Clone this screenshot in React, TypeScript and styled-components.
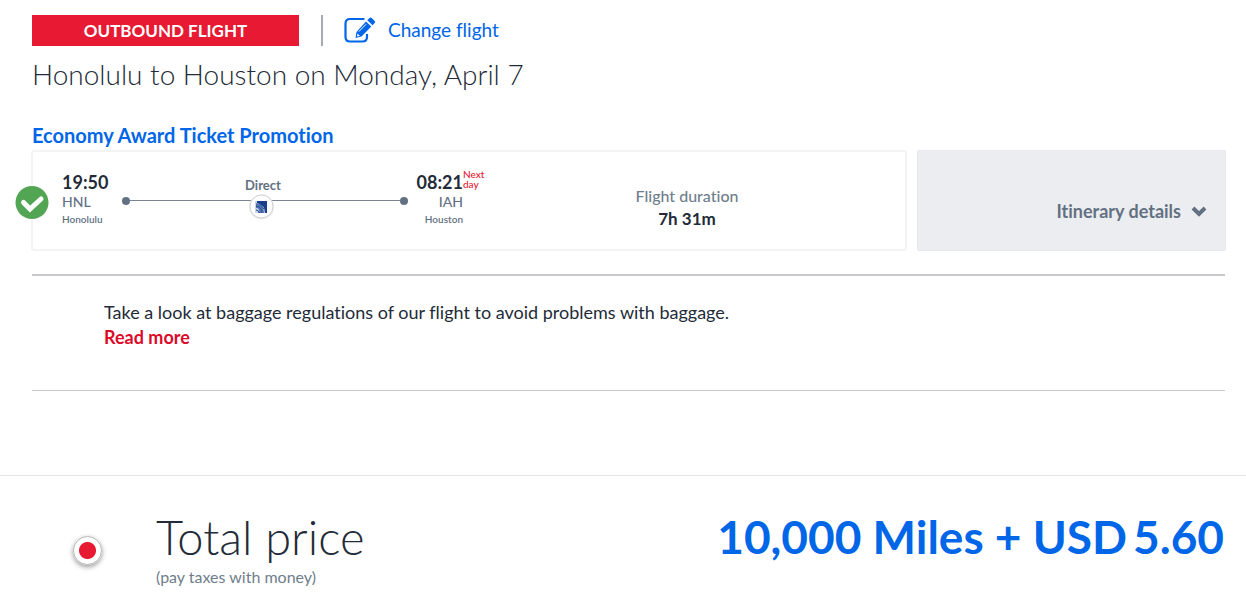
import React from "react";
import styled, { createGlobalStyle } from "styled-components";

const GlobalStyle = createGlobalStyle`
  *, *::before, *::after { box-sizing: border-box; }
  body {
    margin: 0;
    background: #fff;
    color: #232b38;
    font-family: Lato, "Open Sans", sans-serif;
    font-size: 16px;
    font-variant-ligatures: none;
  }
  h1, h2, p { margin: 0; }
  button { font: inherit; }
`;

const Section = styled.section`
  padding: 15px 21px 84px 32px;
`;

const Header = styled.header`
  display: flex;
  align-items: center;
  height: 31px;
`;

const Badge = styled.span`
  width: 267px;
  line-height: 31px;
  background: #e81932;
  color: #fff;
  font-size: 17px;
  font-weight: 700;
  text-align: center;
`;

const ChangeLink = styled.a`
  display: flex;
  align-items: center;
  gap: 12px;
  height: 31px;
  margin-left: 22px;
  padding: 0 0 2px 21px;
  border-left: 2px solid #a5abb5;
  color: #0066e8;
  font-size: 19px;
  line-height: 29px;
  text-decoration: none;
`;

const Title = styled.h1`
  margin-top: 10px;
  font-size: 28px;
  font-weight: 300;
  line-height: 36px;
`;

const FareName = styled.h2`
  margin-top: 31px;
  padding-bottom: 2px;
  color: #0066e8;
  font-size: 20px;
  font-weight: 700;
  line-height: 25px;
`;

const FlightRow = styled.div`
  display: flex;
  gap: 10px;
  margin: 0 -1px;
`;

const FlightCard = styled.article`
  position: relative;
  display: flex;
  flex: 1;
  height: 101px;
  padding: 20px 0 20px 29px;
  border: 2px solid #f3f3f4;
  border-radius: 3px;
`;

const SelectedMark = styled.svg`
  position: absolute;
  left: -19px;
  top: 32px;
`;

const Stop = styled.div<{ $end?: boolean }>`
  display: flex;
  flex-direction: column;
  width: ${(p) => (p.$end ? 47 : 60)}px;
  text-align: ${(p) => (p.$end ? "right" : "left")};
  color: #627182;
`;

const Time = styled.time`
  position: relative;
  color: #232b38;
  font-size: 18px;
  font-weight: 700;
  line-height: 20px;
`;

const NextDay = styled.span`
  position: absolute;
  left: 100%;
  top: -3px;
  width: 24px;
  color: #e81932;
  font-size: 10px;
  font-weight: 500;
  line-height: 10px;
  text-align: left;
`;

const Code = styled.span`
  font-size: 14px;
  font-weight: 500;
  line-height: 20px;
`;

const City = styled.span`
  font-size: 10px;
  font-weight: 600;
  line-height: 14px;
`;

const Route = styled.div`
  display: flex;
  flex-direction: column;
  flex-shrink: 0;
  align-items: center;
  width: 286px;
  margin-right: 8px;
`;

const RouteLabel = styled.span`
  padding: 6px 4px 0 0;
  color: #627182;
  font-size: 13px;
  font-weight: 700;
  line-height: 15px;
`;

const RouteTrack = styled.svg`
  flex-shrink: 0;
  margin-top: 1px;
`;

const Duration = styled.dl`
  flex: 1;
  margin: 12px 0 0;
  padding-left: 6px;
  text-align: center;
  line-height: 23px;
`;

const DurationLabel = styled.dt`
  color: #6f7e8c;
  font-weight: 500;
`;

const DurationValue = styled.dd`
  margin: 0;
  font-size: 17px;
  font-weight: 700;
`;

const DetailsPanel = styled.div`
  display: flex;
  align-items: center;
  justify-content: flex-end;
  flex: 0 0 309px;
  padding: 21px 18px 0 0;
  border: 1px solid #e6e8ec;
  border-radius: 2px;
  background: #ecedf1;
`;

const DetailsButton = styled.button`
  display: flex;
  align-items: center;
  gap: 10px;
  padding: 0;
  border: 0;
  background: none;
  color: #627182;
  font-size: 18px;
  font-weight: 700;
  line-height: 22px;
`;

const Notice = styled.div`
  margin-top: 23px;
  padding: 24px 72px 40px;
  border-top: 2px solid #c8c8cc;
  border-bottom: 1px solid #c8c8cc;
  font-size: 18px;
  line-height: 25px;
`;

const ReadMore = styled.a`
  color: #dc0a28;
  font-weight: 700;
  text-decoration: none;
`;

const Summary = styled.section`
  display: flex;
  align-items: flex-start;
  padding: 33px 22px 8px 73px;
  border-top: 1px solid #e3e3e3;
`;

const PriceRadio = styled.input`
  appearance: none;
  width: 29px;
  height: 29px;
  margin: 27px 54px 0 0;
  border: 1px solid #b4b4b4;
  border-radius: 50%;
  background: radial-gradient(circle, #e81932 8px, #fff 9px);
  box-shadow: 0 2px 5px rgba(0, 0, 0, 0.4);
`;

const PriceLabel = styled.label`
  display: flex;
  flex-direction: column;
  flex: 1;
`;

const PriceHeading = styled.span`
  font-size: 47px;
  font-weight: 300;
  line-height: 56px;
`;

const PriceNote = styled.span`
  color: #6f7e8c;
  font-size: 16px;
  line-height: 24px;
`;

const Price = styled.output`
  display: flex;
  gap: 6px;
  color: #0066e8;
  font-size: 46px;
  font-weight: 700;
  line-height: 56px;
`;

const EditIcon = () => (
  <svg width="32" height="26" viewBox="0 0 32 26" fill="none" aria-hidden="true">
    <path d="M20.500 2H6Q1.500 2 1.500 6.500V20Q1.500 24.500 6 24.500H18.500Q23 24.500 23 20V17" stroke="#0066e8" strokeWidth="2.200" />
    <path d="M22 4.500 27.300 9.500 17.500 19.500 11.500 21 12.500 15Z" fill="#0066e8" />
    <path d="M23.300 3.200 25.500 1Q26.500 0 27.600 1L30.700 4Q31.700 5 30.700 6L28.500 8.200Z" fill="#0066e8" />
    <path d="M14.800 14.600 22 7.300" stroke="#fff" />
    <path d="M13.600 16.500 15.900 18.900 13 19.600Z" fill="#fff" />
  </svg>
);

const RouteLine = () => (
  <RouteTrack width="286" height="30" viewBox="0 0 286 30" aria-hidden="true">
    <path d="M4 6.500H282" stroke="#7b8490" />
    <circle cx="4" cy="7" r="4" fill="#627182" />
    <circle cx="282" cy="7" r="4" fill="#627182" />
    <circle cx="139.500" cy="13" r="12.500" fill="#ececec" />
    <circle cx="139.500" cy="12.500" r="11.500" fill="#fff" stroke="#d0d0d0" />
    <rect x="133" y="7" width="12" height="12" fill="#c9d6e9" />
    <path d="M135 7H145V19H143Q143 11 135 9Z" fill="#1c3c8c" />
    <path d="M134 9Q142 10 142 19H137Q138 14 134 14Z" fill="#5577b2" />
    <path d="M134 12Q140 13 140 19M134 16Q137 16 137 19M137 9 142 15" stroke="#244b94" fill="none" />
  </RouteTrack>
);

export default function App() {
  return (
    <main>
      <GlobalStyle />
      <Section>
        <Header>
          <Badge>OUTBOUND FLIGHT</Badge>
          <ChangeLink href="#change">
            <EditIcon />
            Change flight
          </ChangeLink>
        </Header>
        <Title>Honolulu to Houston on Monday, April 7</Title>
        <FareName>Economy Award Ticket Promotion</FareName>
        <FlightRow>
          <FlightCard>
            <SelectedMark width="36" height="36" viewBox="0 0 36 36" aria-hidden="true">
              <circle cx="18" cy="18" r="18" fill="#fff" />
              <circle cx="18" cy="18.500" r="16.500" fill="#52a552" />
              <path d="M9.500 18.500 16 25 27 15" fill="none" stroke="#fff" strokeWidth="5" strokeLinejoin="miter" strokeLinecap="round" />
            </SelectedMark>
            <Stop>
              <Time>19:50</Time>
              <Code>HNL</Code>
              <City>Honolulu</City>
            </Stop>
            <Route>
              <RouteLabel>Direct</RouteLabel>
              <RouteLine />
            </Route>
            <Stop $end>
              <Time>
                08:21
                <NextDay>Next day</NextDay>
              </Time>
              <Code>IAH</Code>
              <City>Houston</City>
            </Stop>
            <Duration>
              <DurationLabel>Flight duration</DurationLabel>
              <DurationValue>7h 31m</DurationValue>
            </Duration>
          </FlightCard>
          <DetailsPanel>
            <DetailsButton type="button">
              Itinerary details
              <svg width="16" height="12" viewBox="0 0 16 12" aria-hidden="true">
                <path d="M2 3 8 9 14 3" fill="none" stroke="#627182" strokeWidth="4" />
              </svg>
            </DetailsButton>
          </DetailsPanel>
        </FlightRow>
        <Notice>
          <p>Take a look at baggage regulations of our flight to avoid problems with baggage.</p>
          <ReadMore href="#baggage">Read more</ReadMore>
        </Notice>
      </Section>
      <Summary>
        <PriceRadio type="radio" id="pay-miles" name="payment" defaultChecked />
        <PriceLabel htmlFor="pay-miles">
          <PriceHeading>Total price</PriceHeading>
          <PriceNote>(pay taxes with money)</PriceNote>
        </PriceLabel>
        <Price htmlFor="pay-miles">
          <span>10,000 Miles + USD</span>
          <span>5.60</span>
        </Price>
      </Summary>
    </main>
  );
}
